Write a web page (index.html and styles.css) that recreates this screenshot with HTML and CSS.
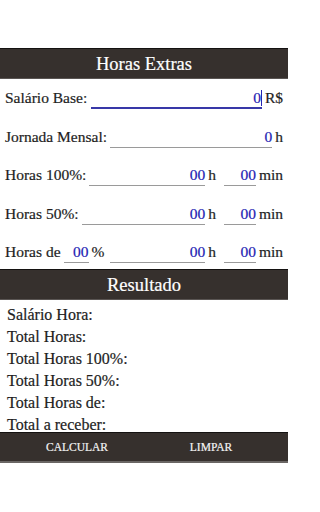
FILE: index.html
```html
<!DOCTYPE html>
<html lang="pt">
<head>
<meta charset="utf-8">
<link rel="stylesheet" href="styles.css">
</head>
<body>
<div class="screen">
  <div class="topspace"></div>
  <div class="bar title">Horas Extras</div>
  <div class="form">
    <div class="row">
      <span class="label">Salário Base:</span>
      <span class="in focus"><span class="val">0</span><span class="cursor"></span></span>
      <span class="unit">R$</span>
    </div>
    <div class="row">
      <span class="label">Jornada Mensal:</span>
      <span class="in"><span class="val">0</span></span>
      <span class="unit">h</span>
    </div>
    <div class="row">
      <span class="label">Horas 100%:</span>
      <span class="in"><span class="val">00</span></span>
      <span class="unit">h</span>
      <span class="in min"><span class="val">00</span></span>
      <span class="unit">min</span>
    </div>
    <div class="row">
      <span class="label">Horas 50%:</span>
      <span class="in"><span class="val">00</span></span>
      <span class="unit">h</span>
      <span class="in min"><span class="val">00</span></span>
      <span class="unit">min</span>
    </div>
    <div class="row">
      <span class="label">Horas de</span>
      <span class="in pct"><span class="val">00</span></span>
      <span class="unit pctsign">%</span>
      <span class="in"><span class="val">00</span></span>
      <span class="unit">h</span>
      <span class="in min"><span class="val">00</span></span>
      <span class="unit">min</span>
    </div>
  </div>
  <div class="bar title">Resultado</div>
  <div class="results">
    <div class="res">Salário Hora:</div>
    <div class="res">Total Horas:</div>
    <div class="res">Total Horas 100%:</div>
    <div class="res">Total Horas 50%:</div>
    <div class="res">Total Horas de:</div>
    <div class="res">Total a receber:</div>
  </div>
  <div class="bar buttons">
    <span class="btn">CALCULAR</span>
    <span class="btn">LIMPAR</span>
  </div>
</div>
</body>
</html>
```
FILE: styles.css
```css
html, body {
  margin: 0;
  padding: 0;
  background: #ffffff;
}
.screen {
  width: 288px;
  font-family: "Liberation Serif", "DejaVu Serif", serif;
  color: #1e1e1e;
  -webkit-text-stroke: 0.2px currentColor;
}
.topspace {
  height: 48px;
}
.bar {
  box-sizing: border-box;
  height: 31px;
  background: #36302d;
  border-top: 1px solid #141211;
  border-bottom: 1px solid #5a5553;
  color: #ffffff;
}
.title {
  display: flex;
  align-items: center;
  justify-content: center;
  font-size: 18.5px;
  line-height: 20px;
  padding-top: 1px;
}
.form {
  height: 190px;
}
.row {
  box-sizing: border-box;
  height: 38.5px;
  padding: 11px 5px 0 5px;
  display: flex;
  align-items: baseline;
  font-size: 15.5px;
  line-height: 16px;
}
.row:last-child {
  height: 36px;
}
.label {
  flex: none;
  margin-right: 3px;
  white-space: nowrap;
}
.in {
  flex: 1;
  display: inline-flex;
  justify-content: flex-end;
  align-items: baseline;
  border-bottom: 1px solid #9a9a9a;
  padding-bottom: 2px;
  color: #2424b4;
  min-width: 0;
}
.in.focus {
  border-bottom: 2px solid #3838a8;
  padding-bottom: 1px;
  margin-left: 1px;
}
.cursor {
  display: inline-block;
  width: 1px;
  height: 16px;
  background: #2424b4;
  align-self: flex-end;
}
.in.min {
  flex: none;
  width: 32px;
  margin-left: 8px;
}
.in.pct {
  flex: none;
  width: 25px;
}
.unit {
  flex: none;
  margin-left: 3px;
  white-space: nowrap;
}
.pctsign {
  margin-right: 6px;
}
.results {
  box-sizing: border-box;
  height: 132px;
  padding: 4px 7px 0 7px;
  overflow: hidden;
  font-size: 16px;
  line-height: 22px;
}
.res {
  height: 22px;
  white-space: nowrap;
}
.buttons {
  display: flex;
  padding: 0 10px;
  align-items: center;
  border-bottom: 2px solid #6a6664;
}
.btn {
  flex: 1;
  text-align: center;
  font-size: 11.5px;
  color: #f4f4f4;
}
```
